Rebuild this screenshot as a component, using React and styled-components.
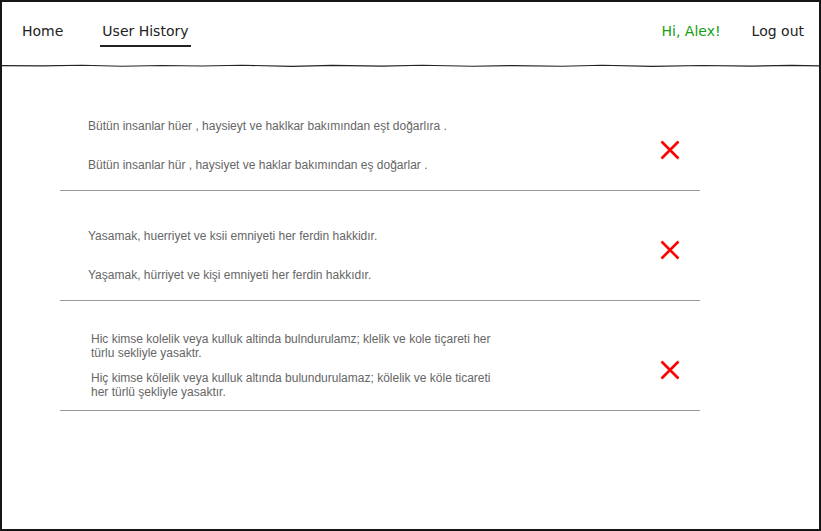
import styled, { createGlobalStyle } from "styled-components";

const GlobalStyle = createGlobalStyle`
  body {
    margin: 0;
    background: #fff;
  }
`;

const Frame = styled.div`
  width: 821px;
  height: 531px;
  box-sizing: border-box;
  border: 2px solid #161616;
  background: #fff;
  overflow: hidden;
`;

const Header = styled.header`
  height: 62px;
  display: flex;
  align-items: center;
  justify-content: space-between;
  padding: 2px 15px 0 20px;
  box-sizing: border-box;
  font-family: "DejaVu Sans", sans-serif;
  font-size: 14px;
  color: #222;
`;

const Nav = styled.nav`
  display: flex;
  gap: 39px;
`;

const NavLink = styled.a`
  position: relative;
  color: #222;
  text-decoration: none;
  cursor: pointer;
  padding: 0 0 6px;

  &::after {
    content: "";
    position: absolute;
    left: -2px;
    right: -2px;
    bottom: -2px;
    height: 2px;
    background: ${(props) => (props.active ? "#222" : "transparent")};
  }
`;

const Account = styled.div`
  display: flex;
  gap: 31px;
  padding-bottom: 6px;
`;

const Greeting = styled.span`
  color: #14a014;
`;

const LogOut = styled.a`
  color: #222;
  cursor: pointer;
`;

const Wave = styled.svg`
  display: block;
  width: 100%;
  height: 4px;
`;

const List = styled.div`
  width: 640px;
  margin: 13px 0 0 58px;
`;

const Row = styled.div`
  display: grid;
  grid-template-columns: 1fr 60px;
  height: 110px;
  box-sizing: border-box;
  border-bottom: 1px solid #9a9a9a;
`;

const Texts = styled.div`
  padding: 25px 0 0 ${(props) => props.indent}px;
`;

const Sentence = styled.p`
  margin: 0;
  height: 39px;
  max-width: 405px;
  display: flex;
  align-items: center;
  font-family: "Liberation Sans", Arial, sans-serif;
  font-size: 12px;
  line-height: 14px;
  color: #666;
`;

const Remove = styled.button`
  align-self: start;
  justify-self: center;
  margin-top: ${(props) => props.top}px;
  width: 20px;
  height: 20px;
  padding: 0;
  border: none;
  background: none;
  cursor: pointer;
`;

const rows = [
  {
    wrong: "Bütün insanlar hüer , haysieyt ve haklkar bakımından eşt doğarlıra .",
    right: "Bütün insanlar hür , haysiyet ve haklar bakımından eş doğarlar .",
    indent: 28,
    top: 59,
  },
  {
    wrong: "Yasamak, huerriyet ve ksii emniyeti her ferdin hakkidır.",
    right: "Yaşamak, hürriyet ve kişi emniyeti her ferdin hakkıdır.",
    indent: 28,
    top: 49,
  },
  {
    wrong:
      "Hic kimse kolelik veya kulluk altinda bulndurulamz; klelik ve kole tiçareti her türlu sekliyle yasaktr.",
    right:
      "Hiç kimse kölelik veya kulluk altında bulundurulamaz; kölelik ve köle ticareti her türlü şekliyle yasaktır.",
    indent: 31,
    top: 59,
  },
];

function CrossIcon() {
  return (
    <svg width="20" height="20" viewBox="0 0 20 20">
      <path
        d="M1.5 1.5 L18.5 18.5 M18.5 1.5 L1.5 18.5"
        stroke="#f00"
        strokeWidth="2.6"
        fill="none"
      />
    </svg>
  );
}

export default function App() {
  return (
    <>
      <GlobalStyle />
      <Frame>
        <Header>
          <Nav>
            <NavLink>Home</NavLink>
            <NavLink active>User History</NavLink>
          </Nav>
          <Account>
            <Greeting>Hi, Alex!</Greeting>
            <LogOut>Log out</LogOut>
          </Account>
        </Header>
        <Wave viewBox="0 0 817 4" preserveAspectRatio="none">
          <path
            d="M0 1.6 L40 1.9 L80 1.2 L120 2.3 L160 1.5 L200 2.0 L240 1.3 L290 2.4 L330 1.4 L380 2.1 L420 1.2 L470 2.3 L510 1.6 L560 2.2 L600 1.3 L650 2.4 L700 1.5 L750 2.1 L790 1.4 L817 1.9"
            stroke="#222"
            strokeWidth="1.1"
            fill="none"
          />
        </Wave>
        <List>
          {rows.map((row, i) => (
            <Row key={i}>
              <Texts indent={row.indent}>
                <Sentence>{row.wrong}</Sentence>
                <Sentence>{row.right}</Sentence>
              </Texts>
              <Remove top={row.top} aria-label="Delete">
                <CrossIcon />
              </Remove>
            </Row>
          ))}
        </List>
      </Frame>
    </>
  );
}
